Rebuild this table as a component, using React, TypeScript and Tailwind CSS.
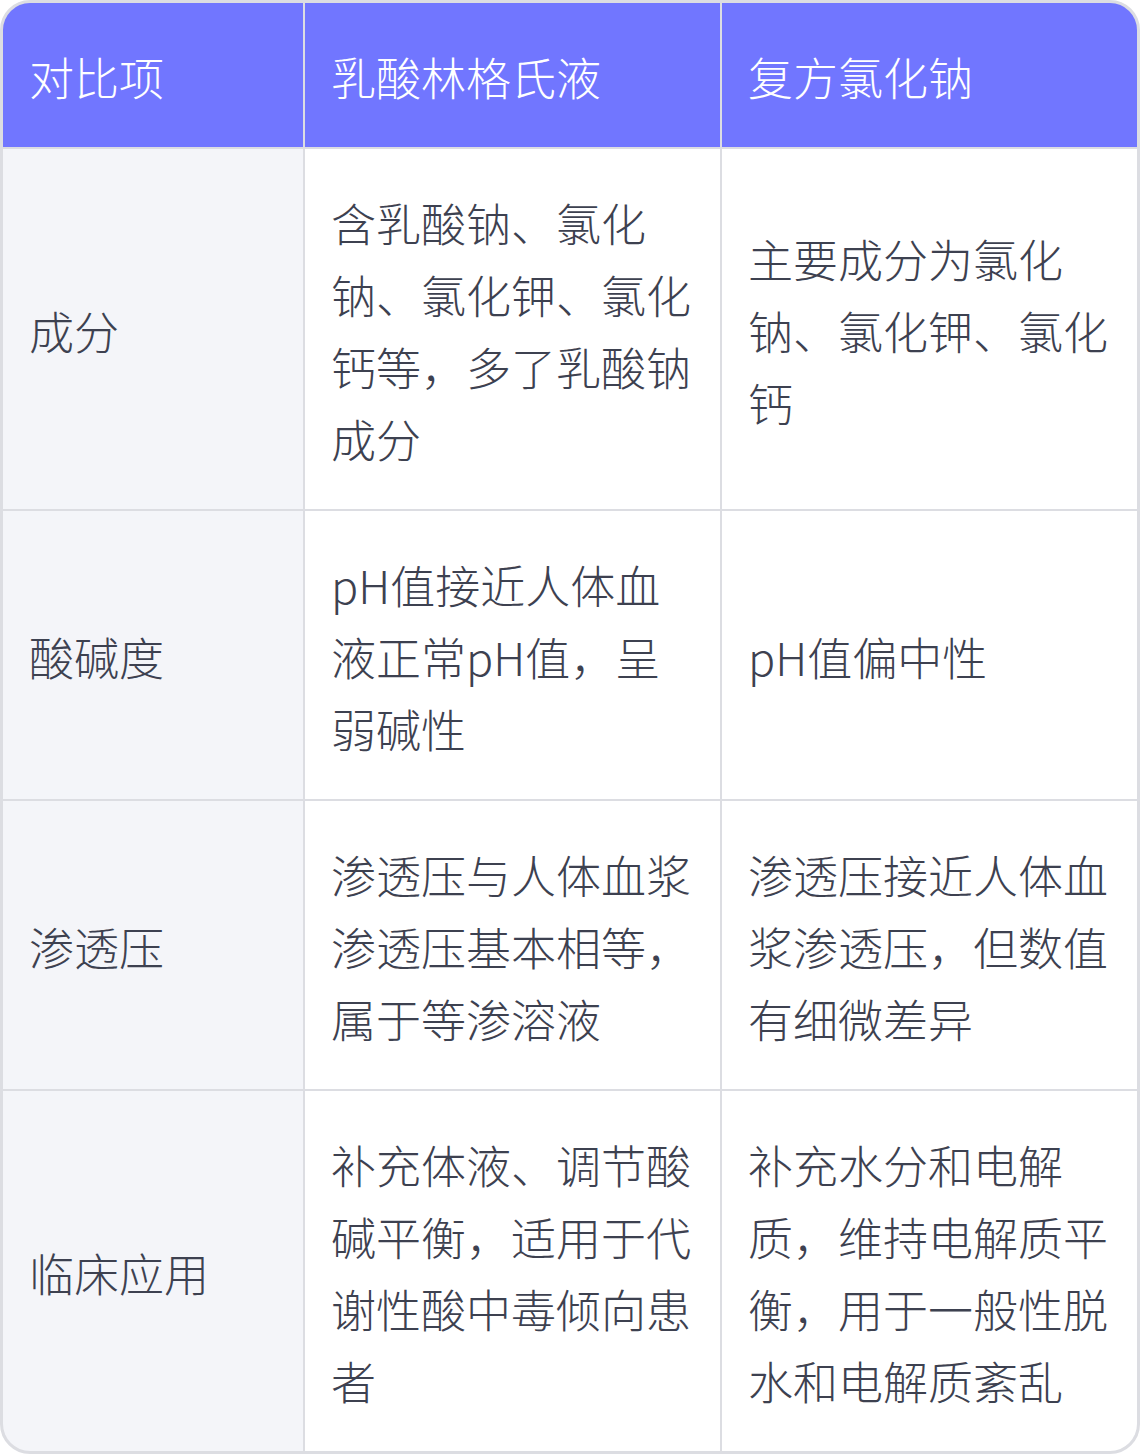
import { Fragment } from "react";

const rows = [
  {
    name: "成分",
    a: "含乳酸钠、氯化钠、氯化钾、氯化钙等，多了乳酸钠成分",
    b: "主要成分为氯化钠、氯化钾、氯化钙",
  },
  {
    name: "酸碱度",
    a: "pH值接近人体血液正常pH值，呈弱碱性",
    b: "pH值偏中性",
  },
  {
    name: "渗透压",
    a: "渗透压与人体血浆渗透压基本相等，属于等渗溶液",
    b: "渗透压接近人体血浆渗透压，但数值有细微差异",
  },
  {
    name: "临床应用",
    a: "补充体液、调节酸碱平衡，适用于代谢性酸中毒倾向患者",
    b: "补充水分和电解质，维持电解质平衡，用于一般性脱水和电解质紊乱",
  },
];

const cell = "flex items-center pl-[26px] pr-[22px] pt-[38px] pb-[34px]";

export default function App() {
  return (
    <div
      className="w-[1140px] h-[1454px] bg-white"
      style={{ fontFamily: '"Noto Sans CJK SC", "Noto Sans", sans-serif' }}
    >
      <div className="w-full h-full border-[3px] border-[#dcdde2] rounded-[30px] overflow-hidden bg-[#dcdde2]">
        <div className="grid grid-cols-[300px_415px_415px] gap-[2px] text-[45px] leading-[72px] font-light text-[#3d4150]">
          <div className={`${cell} bg-[#7176ff] text-white`}>对比项</div>
          <div className={`${cell} bg-[#7176ff] text-white`}>乳酸林格氏液</div>
          <div className={`${cell} bg-[#7176ff] text-white`}>复方氯化钠</div>
          {rows.map((r) => (
            <Fragment key={r.name}>
              <div className={`${cell} bg-[#f4f5f9]`}>{r.name}</div>
              <div className={`${cell} bg-white`}>{r.a}</div>
              <div className={`${cell} bg-white`}>{r.b}</div>
            </Fragment>
          ))}
        </div>
      </div>
    </div>
  );
}
